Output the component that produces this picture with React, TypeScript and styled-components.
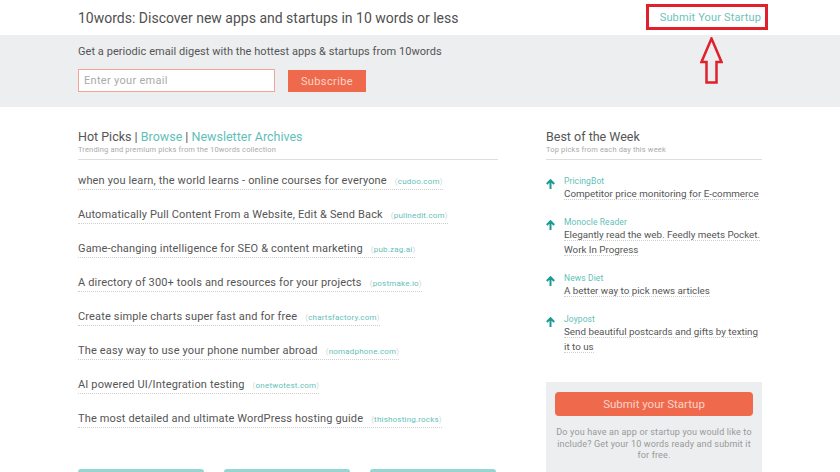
import styled, { createGlobalStyle } from "styled-components";

const picks = [
  { text: "when you learn, the world learns - online courses for everyone", domain: "cudoo.com" },
  { text: "Automatically Pull Content From a Website, Edit & Send Back", domain: "pullnedit.com" },
  { text: "Game-changing intelligence for SEO & content marketing", domain: "pub.zag.ai" },
  { text: "A directory of 300+ tools and resources for your projects", domain: "postmake.io" },
  { text: "Create simple charts super fast and for free", domain: "chartsfactory.com" },
  { text: "The easy way to use your phone number abroad", domain: "nomadphone.com" },
  { text: "AI powered UI/Integration testing", domain: "onetwotest.com" },
  { text: "The most detailed and ultimate WordPress hosting guide", domain: "thishosting.rocks" },
];

const weekly = [
  { name: "PricingBot", desc: "Competitor price monitoring for E-commerce" },
  { name: "Monocle Reader", desc: "Elegantly read the web. Feedly meets Pocket. Work In Progress" },
  { name: "News Diet", desc: "A better way to pick news articles" },
  { name: "Joypost", desc: "Send beautiful postcards and gifts by texting it to us" },
];

export default function App() {
  return (
    <>
      <GlobalStyle />
      <Header>
        <Container>
          <HeaderRow>
            <SiteTitle>10words: Discover new apps and startups in 10 words or less</SiteTitle>
            <SubmitLink href="#">
              Submit Your Startup
              <Callout width="23" height="47" viewBox="0 0 23 47">
                <path
                  d="M11.5 1.5 L21.5 25 L16.5 25 L16.5 45.5 L6.5 45.5 L6.5 25 L1.5 25 Z"
                  fill="none"
                  stroke="#e0202a"
                  strokeWidth="2.5"
                />
              </Callout>
            </SubmitLink>
          </HeaderRow>
        </Container>
      </Header>

      <Band>
        <Container>
          <BandText>Get a periodic email digest with the hottest apps &amp; startups from 10words</BandText>
          <Form>
            <EmailInput placeholder="Enter your email" />
            <SubscribeButton type="button">Subscribe</SubscribeButton>
          </Form>
        </Container>
      </Band>

      <Container>
        <Columns>
          <Main>
            <SectionHead>
              <SectionTitle>
                Hot Picks | <Accent>Browse</Accent> | <Accent>Newsletter Archives</Accent>
              </SectionTitle>
              <SectionSub>Trending and premium picks from the 10words collection</SectionSub>
            </SectionHead>
            <PickList>
              {picks.map((p) => (
                <PickRow key={p.domain}>
                  <Pick>
                    {p.text}
                    <Domain>
                      <Bracket>(</Bracket>
                      {p.domain}
                      <Bracket>)</Bracket>
                    </Domain>
                  </Pick>
                </PickRow>
              ))}
            </PickList>
            <Pager>
              <PagerButton />
              <PagerButton />
              <PagerButton />
            </Pager>
          </Main>

          <Side>
            <SectionHead>
              <SectionTitle>Best of the Week</SectionTitle>
              <SectionSub>Top picks from each day this week</SectionSub>
            </SectionHead>
            <WeekList>
              {weekly.map((w) => (
                <WeekItem key={w.name}>
                  <UpArrow width="9" height="10" viewBox="0 0 9 10">
                    <path d="M4.5 10 V1.5 M0.8 5 L4.5 1.2 L8.2 5" fill="none" stroke="#1a9a93" strokeWidth="2" />
                  </UpArrow>
                  <WeekBody>
                    <WeekName>{w.name}</WeekName>
                    <WeekDesc>
                      <span>{w.desc}</span>
                    </WeekDesc>
                  </WeekBody>
                </WeekItem>
              ))}
            </WeekList>
            <SubmitPanel>
              <SubmitButton type="button">Submit your Startup</SubmitButton>
              <PanelText>
                Do you have an app or startup you would like to include? Get your 10 words ready and submit it for free.
              </PanelText>
            </SubmitPanel>
          </Side>
        </Columns>
      </Container>
    </>
  );
}

const GlobalStyle = createGlobalStyle`
  body {
    margin: 0;
    background: #fff;
    font-family: Roboto, "Noto Sans", sans-serif;
    color: #555;
  }
`;

const Container = styled.div`
  width: 684px;
  margin: 0 auto;
`;

const Header = styled.header`
  height: 35px;
`;

const HeaderRow = styled.div`
  height: 35px;
  display: flex;
  align-items: center;
  justify-content: space-between;
`;

const SiteTitle = styled.h1`
  margin: 0;
  font-size: 14px;
  font-weight: 400;
  color: #505050;
`;

const SubmitLink = styled.a`
  position: relative;
  margin-right: 1px;
  font-size: 11px;
  letter-spacing: 0.15px;
  color: #6cc3bd;
  text-decoration: none;

  &::after {
    content: "";
    position: absolute;
    left: -14px;
    right: -7px;
    top: -7px;
    bottom: -6px;
    border: 3px solid #e0202a;
  }
`;

const Callout = styled.svg`
  position: absolute;
  left: 40px;
  top: 26px;
  z-index: 2;
`;

const Band = styled.section`
  height: 72px;
  background: #eceef0;
  box-sizing: border-box;
  padding-top: 9px;
`;

const BandText = styled.p`
  margin: 0;
  font-size: 11px;
  letter-spacing: 0.05px;
  color: #555;
  line-height: 16px;
`;

const Form = styled.div`
  display: flex;
  gap: 13px;
  margin-top: 9px;
`;

const EmailInput = styled.input`
  width: 197px;
  height: 23px;
  box-sizing: border-box;
  border: 1px solid #f1a594;
  background: #fff;
  padding: 0 5px;
  font-family: Roboto, sans-serif;
  font-size: 11px;
  letter-spacing: 0.3px;
  outline: none;

  &::placeholder {
    color: #aaa;
  }
`;

const SubscribeButton = styled.button`
  width: 78px;
  height: 22px;
  margin-top: 1px;
  border: none;
  background: #ef6a4c;
  color: #fbd3c9;
  font-family: Roboto, sans-serif;
  font-size: 11px;
  letter-spacing: 0.4px;
`;

const Columns = styled.div`
  display: flex;
  gap: 48px;
  padding-top: 22px;
`;

const Main = styled.div`
  width: 420px;
`;

const Side = styled.aside`
  width: 216px;
`;

const SectionHead = styled.div`
  border-bottom: 1px solid #dedede;
  padding-bottom: 4px;
`;

const SectionTitle = styled.h2`
  margin: 0;
  font-size: 12.5px;
  font-weight: 400;
  line-height: 16px;
  color: #555;
`;

const Accent = styled.span`
  color: #5fbfb8;
`;

const SectionSub = styled.div`
  font-size: 7.5px;
  letter-spacing: 0.15px;
  color: #aaa;
  line-height: 10px;
`;

const PickList = styled.ul`
  list-style: none;
  margin: 9px 0 0;
  padding: 0;
`;

const PickRow = styled.li`
  height: 34px;
`;

const Pick = styled.span`
  display: inline-block;
  font-size: 11px;
  letter-spacing: 0.15px;
  color: #555;
  line-height: 14px;
  border-bottom: 1px dotted #cfcfcf;
`;

const Domain = styled.span`
  margin-left: 8px;
  font-size: 8px;
  color: #62bfb8;
  letter-spacing: 0.2px;
`;

const Bracket = styled.span`
  color: #d5d5d5;
`;

const Pager = styled.div`
  display: flex;
  gap: 20px;
  margin-top: 28px;
`;

const PagerButton = styled.div`
  width: 126px;
  height: 30px;
  border-radius: 3px;
  background: #94d6d2;
`;

const WeekList = styled.ul`
  list-style: none;
  margin: 17px 0 0;
  padding: 0;
`;

const WeekItem = styled.li`
  display: flex;
  gap: 9px;
  margin-bottom: 17px;
`;

const UpArrow = styled.svg`
  flex: none;
  margin-top: 2px;
`;

const WeekBody = styled.div`
  flex: 1;
`;

const WeekName = styled.div`
  font-size: 8.5px;
  letter-spacing: 0.1px;
  line-height: 9px;
  color: #62bfb8;
`;

const WeekDesc = styled.div`
  font-size: 9.8px;
  line-height: 15px;
  color: #555;

  span {
    border-bottom: 1px dotted #cfcfcf;
  }
`;

const SubmitPanel = styled.div`
  margin-top: 28px;
  background: #eceef0;
  padding: 10px 9px 12px;
`;

const SubmitButton = styled.button`
  display: block;
  width: 100%;
  height: 24px;
  border: none;
  border-radius: 4px;
  background: #ef6a4c;
  color: #fbd3c9;
  font-family: Roboto, sans-serif;
  font-size: 11.5px;
`;

const PanelText = styled.p`
  margin: 11px 0 0;
  font-size: 9px;
  letter-spacing: 0.15px;
  line-height: 11.5px;
  text-align: center;
  color: #999;
`;
